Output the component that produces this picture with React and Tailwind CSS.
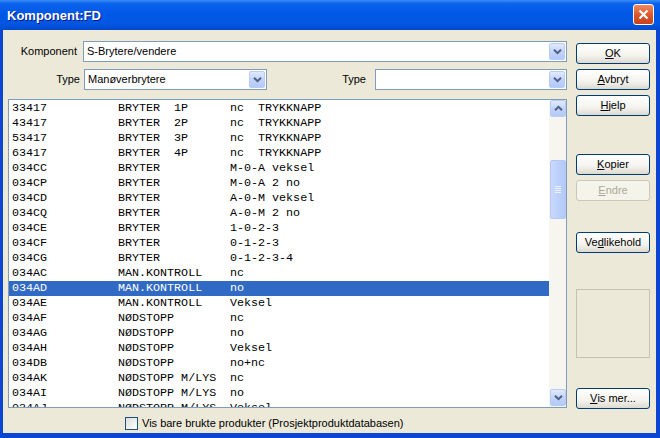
import React from "react";

const rows = [
  ["33417", "BRYTER  1P", "nc  TRYKKNAPP"],
  ["43417", "BRYTER  2P", "nc  TRYKKNAPP"],
  ["53417", "BRYTER  3P", "nc  TRYKKNAPP"],
  ["63417", "BRYTER  4P", "nc  TRYKKNAPP"],
  ["034CC", "BRYTER", "M-0-A veksel"],
  ["034CP", "BRYTER", "M-0-A 2 no"],
  ["034CD", "BRYTER", "A-0-M veksel"],
  ["034CQ", "BRYTER", "A-0-M 2 no"],
  ["034CE", "BRYTER", "1-0-2-3"],
  ["034CF", "BRYTER", "0-1-2-3"],
  ["034CG", "BRYTER", "0-1-2-3-4"],
  ["034AC", "MAN.KONTROLL", "nc"],
  ["034AD", "MAN.KONTROLL", "no"],
  ["034AE", "MAN.KONTROLL", "Veksel"],
  ["034AF", "NØDSTOPP", "nc"],
  ["034AG", "NØDSTOPP", "no"],
  ["034AH", "NØDSTOPP", "Veksel"],
  ["034DB", "NØDSTOPP", "no+nc"],
  ["034AK", "NØDSTOPP M/LYS", "nc"],
  ["034AI", "NØDSTOPP M/LYS", "no"],
  ["034AJ", "NØDSTOPP M/LYS", "Veksel"],
];

function Chevron({ up = false }) {
  return (
    <svg width="9" height="7" viewBox="0 0 9 7" className="block">
      <path
        d={up ? "M1 5.2 L4.5 1.8 L8 5.2" : "M1 1.8 L4.5 5.2 L8 1.8"}
        fill="none"
        stroke="#4D6185"
        strokeWidth="2"
      />
    </svg>
  );
}

function ArrowBtn({ up = false, h = "h-[17px]" }) {
  return (
    <div
      className={`w-[16px] ${h} flex items-center justify-center rounded-[2px] border border-[#B9CCF6] bg-[linear-gradient(to_bottom,#E1EAFE,#C3D4FB_50%,#B4C9F7)]`}
    >
      <Chevron up={up} />
    </div>
  );
}

function Combo({ value, className }) {
  return (
    <div
      className={`h-[21px] flex items-center border border-[#7F9DB9] bg-white ${className}`}
    >
      <div className="flex-1 pl-[3px] text-[11px] leading-none text-black truncate">
        {value}
      </div>
      <div className="p-[1px]">
        <ArrowBtn />
      </div>
    </div>
  );
}

function Btn({ children, disabled = false, className = "" }) {
  return (
    <div
      className={`h-[21px] w-[74px] flex items-center justify-center rounded-[3px] border text-[11px] leading-none ${
        disabled
          ? "border-[#C9C7BA] bg-[#F5F4EA] text-[#ACA899]"
          : "border-[#003C74] bg-[linear-gradient(to_bottom,#FFFFFF,#F4F3EE_60%,#DCD9CF)] text-black"
      } ${className}`}
    >
      {children}
    </div>
  );
}

export default function App() {
  return (
    <div
      className="w-[660px] h-[438px] flex flex-col bg-[#0A45D3] overflow-hidden"
      style={{ fontFamily: '"Liberation Sans", Arial, sans-serif' }}
    >
      {/* Title bar */}
      <div className="h-[30px] flex items-center pl-[7px] pr-[6px] bg-[linear-gradient(to_bottom,#3C8DF5_0%,#0A62EC_12%,#0058E6_45%,#0356E2_80%,#0349CC_100%)]">
        <div className="flex-1 text-white font-bold text-[13px] leading-none [text-shadow:1px_1px_#0A1883]">
          Komponent:FD
        </div>
        <div className="w-[21px] h-[21px] rounded-[3px] border border-white bg-[linear-gradient(to_bottom,#F08A63,#DC5428_55%,#C8431C)] flex items-center justify-center mb-[1px]">
          <svg width="11" height="11" viewBox="0 0 11 11">
            <path d="M1.5 1.5 L9.5 9.5 M9.5 1.5 L1.5 9.5" stroke="white" strokeWidth="2.2" />
          </svg>
        </div>
      </div>

      {/* Body */}
      <div className="flex-1 ml-[3px] mr-[4px] mb-[5px] bg-[#ECE9D8] flex">
        {/* Left column */}
        <div className="ml-[5px] w-[559px] flex flex-col">
          <div className="mt-[11px] flex items-center">
            <div className="w-[75px] pr-[6px] text-right text-[11px] leading-none text-black">
              Komponent
            </div>
            <Combo value="S-Brytere/vendere" className="flex-1" />
          </div>
          <div className="mt-[7px] flex items-center">
            <div className="w-[76px] pr-[4px] text-right text-[11px] leading-none text-black">
              Type
            </div>
            <Combo value="Manøverbrytere" className="w-[183px]" />
            <div className="w-[108px] pr-[9px] text-right text-[11px] leading-none text-black">
              Type
            </div>
            <Combo value="" className="flex-1" />
          </div>

          {/* List box */}
          <div className="mt-[9px] h-[309px] border border-[#7F9DB9] bg-white flex">
            <div className="flex-1 overflow-hidden pt-[1px]">
              {rows.map((r, i) => {
                const sel = i === 12;
                return (
                  <div
                    key={i}
                    className={`h-[15px] pl-[3px] grid grid-cols-[106px_112px_1fr] items-center whitespace-pre text-[11.7px] leading-none ${
                      sel ? "bg-[#316AC5] text-white" : "text-black"
                    }`}
                    style={{ fontFamily: '"Liberation Mono", "Courier New", monospace' }}
                  >
                    <span>{r[0]}</span>
                    <span>{r[1]}</span>
                    <span>{r[2]}</span>
                  </div>
                );
              })}
            </div>
            {/* Scrollbar */}
            <div className="w-[17px] flex flex-col bg-[#F6F5F0]">
              <div className="pl-[1px]">
                <ArrowBtn up />
              </div>
              <div className="h-[43px]" />
              <div className="ml-[1px] w-[16px] h-[59px] rounded-[2px] border border-[#B3C8F5] bg-[linear-gradient(to_right,#CAD9FC,#BBD0FA_50%,#B5CAF7)] flex flex-col items-center justify-center gap-[1px]">
                <div className="w-[6px] h-[1px] bg-[#EEF3FE]" />
                <div className="w-[6px] h-[1px] bg-[#EEF3FE]" />
                <div className="w-[6px] h-[1px] bg-[#EEF3FE]" />
                <div className="w-[6px] h-[1px] bg-[#EEF3FE]" />
              </div>
              <div className="flex-1" />
              <div className="pl-[1px] pb-[1px]">
                <ArrowBtn />
              </div>
            </div>
          </div>

          {/* Checkbox row */}
          <div className="mt-[9px] ml-[117px] flex items-center">
            <div className="w-[13px] h-[13px] border border-[#1C5180] bg-[linear-gradient(to_bottom_right,#DCDCD7,#FFFFFF)]" />
            <div className="ml-[4px] text-[11px] leading-none text-black">
              Vis bare brukte produkter (Prosjektproduktdatabasen)
            </div>
          </div>
        </div>

        {/* Right column */}
        <div className="ml-[9px] w-[74px] flex flex-col">
          <Btn className="mt-[13px]">
            <span className="underline">O</span>K
          </Btn>
          <Btn className="mt-[5px]">
            <span className="underline">A</span>vbryt
          </Btn>
          <Btn className="mt-[5px]">
            <span className="underline">H</span>jelp
          </Btn>
          <Btn className="mt-[38px]">
            <span className="underline">K</span>opier
          </Btn>
          <Btn className="mt-[5px]" disabled>
            <span className="underline">E</span>ndre
          </Btn>
          <Btn className="mt-[31px]">
            Ve<span className="underline">d</span>likehold
          </Btn>
          <div className="mt-[36px] h-[69px] w-[74px] border border-[#C5C2B2] bg-[#ECE9D8]" />
          <Btn className="mt-[30px]">
            <span className="underline">V</span>is mer...
          </Btn>
        </div>
      </div>
    </div>
  );
}
